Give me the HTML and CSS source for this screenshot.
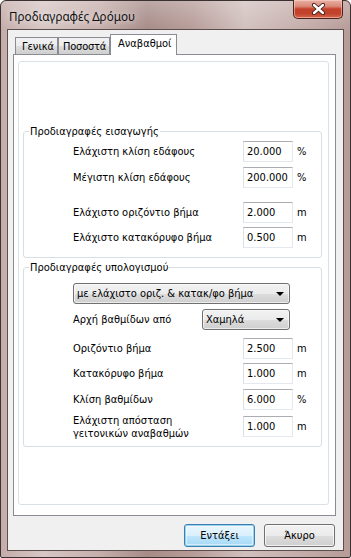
FILE: index.html
```html
<!DOCTYPE html>
<html>
<head>
<meta charset="utf-8">
<link rel="stylesheet" href="styles.css">
</head>
<body>
<div class="window">
  <div class="titlebar">
    <span class="title">Προδιαγραφές Δρόμου</span>
    <div class="close">
      <svg width="13" height="12" viewBox="0 0 13 12">
        <path d="M2 2 L11 10 M11 2 L2 10" stroke="#3a1d18" stroke-width="4.2" stroke-linecap="round" fill="none"/>
        <path d="M2 2 L11 10 M11 2 L2 10" stroke="#ffffff" stroke-width="2.4" stroke-linecap="round" fill="none"/>
      </svg>
    </div>
  </div>
  <div class="client">
    <div class="tabs">
      <div class="tab t1">Γενικά</div>
      <div class="tab t2">Ποσοστά</div>
      <div class="tab active">Αναβαθμοί</div>
    </div>
    <div class="panel">
      <div class="inner">
        <div class="group g1">
          <span class="legend">Προδιαγραφές εισαγωγής</span>
          <div class="row r1"><span class="label">Ελάχιστη κλίση εδάφους</span><span class="input">20.000</span><span class="unit">%</span></div>
          <div class="row r2"><span class="label">Μέγιστη κλίση εδάφους</span><span class="input">200.000</span><span class="unit">%</span></div>
          <div class="row r3"><span class="label">Ελάχιστο οριζόντιο βήμα</span><span class="input">2.000</span><span class="unit">m</span></div>
          <div class="row r4"><span class="label">Ελάχιστο κατακόρυφο βήμα</span><span class="input">0.500</span><span class="unit">m</span></div>
        </div>
        <div class="group g2">
          <span class="legend">Προδιαγραφές υπολογισμού</span>
          <div class="combo wide"><span>με ελάχιστο οριζ. &amp; κατακ/φο βήμα</span><i class="arrow"></i></div>
          <div class="row c2"><span class="label">Αρχή βαθμίδων από</span><div class="combo narrow"><span>Χαμηλά</span><i class="arrow"></i></div></div>
          <div class="row s1"><span class="label">Οριζόντιο βήμα</span><span class="input">2.500</span><span class="unit">m</span></div>
          <div class="row s2"><span class="label">Κατακόρυφο βήμα</span><span class="input">1.000</span><span class="unit">m</span></div>
          <div class="row s3"><span class="label">Κλίση βαθμίδων</span><span class="input">6.000</span><span class="unit">%</span></div>
          <div class="row s4"><span class="label two">Ελάχιστη απόσταση<br>γειτονικών αναβαθμών</span><span class="input">1.000</span><span class="unit">m</span></div>
        </div>
      </div>
    </div>
    <div class="buttons">
      <div class="btn default">Εντάξει</div>
      <div class="btn">Άκυρο</div>
    </div>
  </div>
</div>
</body>
</html>
```
FILE: styles.css
```css
html, body {
  margin: 0;
  padding: 0;
  background: #ffffff;
}
body {
  font-family: "DejaVu Sans Condensed", "DejaVu Sans", sans-serif;
  font-stretch: condensed;
  font-size: 11px;
  color: #000;
}
.window {
  box-sizing: border-box;
  width: 351px;
  height: 558px;
  border: 1px solid #3b3130;
  border-radius: 6px 6px 2px 2px;
  padding: 0 6px 6px 6px;
  display: flex;
  flex-direction: column;
  background:
    linear-gradient(180deg, rgba(255,255,255,0.25) 0px, rgba(255,255,255,0) 30px),
    linear-gradient(90deg, #c4aca9 0%, #d6c6c4 12%, #c6afac 28%, #a68b87 42%, #b79c98 55%, #d1c0be 70%, #c4adaa 86%, #b69b97 100%);
}
.titlebar {
  height: 28px;
  display: flex;
  justify-content: space-between;
  align-items: flex-start;
}
.title {
  font-family: "Noto Sans", "Open Sans", sans-serif;
  font-stretch: normal;
  font-size: 11.7px;
  margin: 7px 0 0 2px;
  color: #111;
  text-shadow: 0 0 6px rgba(255,255,255,0.8);
}
.close {
  box-sizing: border-box;
  width: 50px;
  height: 19px;
  margin: -1px 1px 0 0;
  border: 1px solid #4b221c;
  border-top: none;
  border-radius: 0 0 5px 5px;
  background: linear-gradient(180deg, #e9b0a4 0%, #da8a78 35%, #c4412b 50%, #c0432c 75%, #d9664a 100%);
  box-shadow: inset 0 0 0 1px rgba(255,220,210,0.5);
  display: flex;
  align-items: center;
  justify-content: center;
}
.close svg { display: block; margin-top: -1px; }
.client {
  flex: 1;
  border: 1px solid #5c4e4c;
  background: #f0f0f0;
  display: flex;
  flex-direction: column;
}
.tabs {
  height: 20px;
  margin: 4px 0 0 7px;
  display: flex;
  align-items: flex-end;
  position: relative;
  z-index: 1;
}
.tab {
  box-sizing: border-box;
  height: 17px;
  border: 1px solid #898c95;
  border-bottom: none;
  padding: 2px 0 0 6px;
  line-height: 14px;
  white-space: nowrap;
  flex: none;
  background: linear-gradient(180deg, #f2f2f2 0%, #ebebeb 50%, #dddddd 51%, #cfcfcf 100%);
}
.t1 { width: 43px; }
.t2 { width: 52px; padding-left: 4px; letter-spacing: -0.2px; }
.tab.active {
  width: 67px;
  height: 21px;
  margin-bottom: -1px;
  padding: 2px 0 0 7px;
  background: #ffffff;
}
.panel {
  box-sizing: border-box;
  height: 462px;
  margin: 0 7px 0 5px;
  border: 1px solid #898c95;
  background: #ffffff;
  padding: 6px 6px 10px 4px;
  display: flex;
}
.inner {
  flex: 1;
  border: 1px solid #d9e1e7;
  border-radius: 3px;
  background: #ffffff;
  padding: 69px 6px 0 4px;
}
.group {
  border: 1px solid #d5dfe5;
  border-radius: 3px;
  padding: 0 0 9px 49px;
  display: flex;
  flex-direction: column;
}
.g2 { margin-top: 9px; padding-bottom: 9px; }
.legend {
  align-self: flex-start;
  margin: -8px 0 0 -44px;
  padding: 0 1px;
  height: 15px;
  line-height: 15px;
  background: #ffffff;
}
.row {
  display: flex;
  align-items: center;
  height: 21px;
}
.r1 { margin-top: 2px; }
.r2 { margin-top: 5px; }
.r3 { margin-top: 14px; }
.r4 { margin-top: 4px; }
.c2 { margin-top: 5px; }
.s1 { margin-top: 8px; }
.s2 { margin-top: 4px; }
.s3 { margin-top: 5px; }
.s4 { margin-top: 6px; }
.label {
  width: 170px;
  line-height: 14px;
}
.label.two { line-height: 13px; }
.c2 .label { width: 129px; }
.input {
  box-sizing: border-box;
  width: 50px;
  height: 21px;
  border: 1px solid #abadb3;
  border-left-color: #dbdfe6;
  border-right-color: #e3e9ef;
  border-bottom-color: #e3e9ef;
  padding: 0 0 0 3px;
  line-height: 19px;
  background: #fff;
}
.unit { margin-left: 4px; }
.combo {
  box-sizing: border-box;
  height: 21px;
  border: 1px solid #707070;
  border-radius: 3px;
  background: linear-gradient(180deg, #f2f2f2 0%, #ebebeb 50%, #dddddd 51%, #cfcfcf 100%);
  box-shadow: inset 0 0 0 1px rgba(255,255,255,0.6);
  display: flex;
  align-items: center;
  justify-content: space-between;
  padding: 0 4px 0 3px;
  line-height: 14px;
}
.wide { width: 217px; margin-top: 8px; }
.narrow { width: 88px; }
.arrow {
  width: 0;
  height: 0;
  border-left: 4px solid transparent;
  border-right: 4px solid transparent;
  border-top: 4px solid #000;
  margin-right: 1px;
}
.buttons {
  display: flex;
  justify-content: flex-end;
  gap: 9px;
  margin: 8px 8px 0 0;
}
.btn {
  box-sizing: border-box;
  width: 71px;
  height: 23px;
  border: 1px solid #707070;
  border-radius: 3px;
  background: linear-gradient(180deg, #f2f2f2 0%, #ebebeb 50%, #dddddd 51%, #cfcfcf 100%);
  box-shadow: inset 0 0 0 1px rgba(255,255,255,0.7);
  text-align: center;
  line-height: 21px;
}
.btn.default {
  border-color: #3c7fb1;
  background: linear-gradient(180deg, #eaf6fd 0%, #d9f0fc 50%, #bee6fd 51%, #a7d9f5 100%);
  box-shadow: inset 0 0 0 1px #98d1ef, inset 0 0 0 2px rgba(255,255,255,0.5);
}
```
